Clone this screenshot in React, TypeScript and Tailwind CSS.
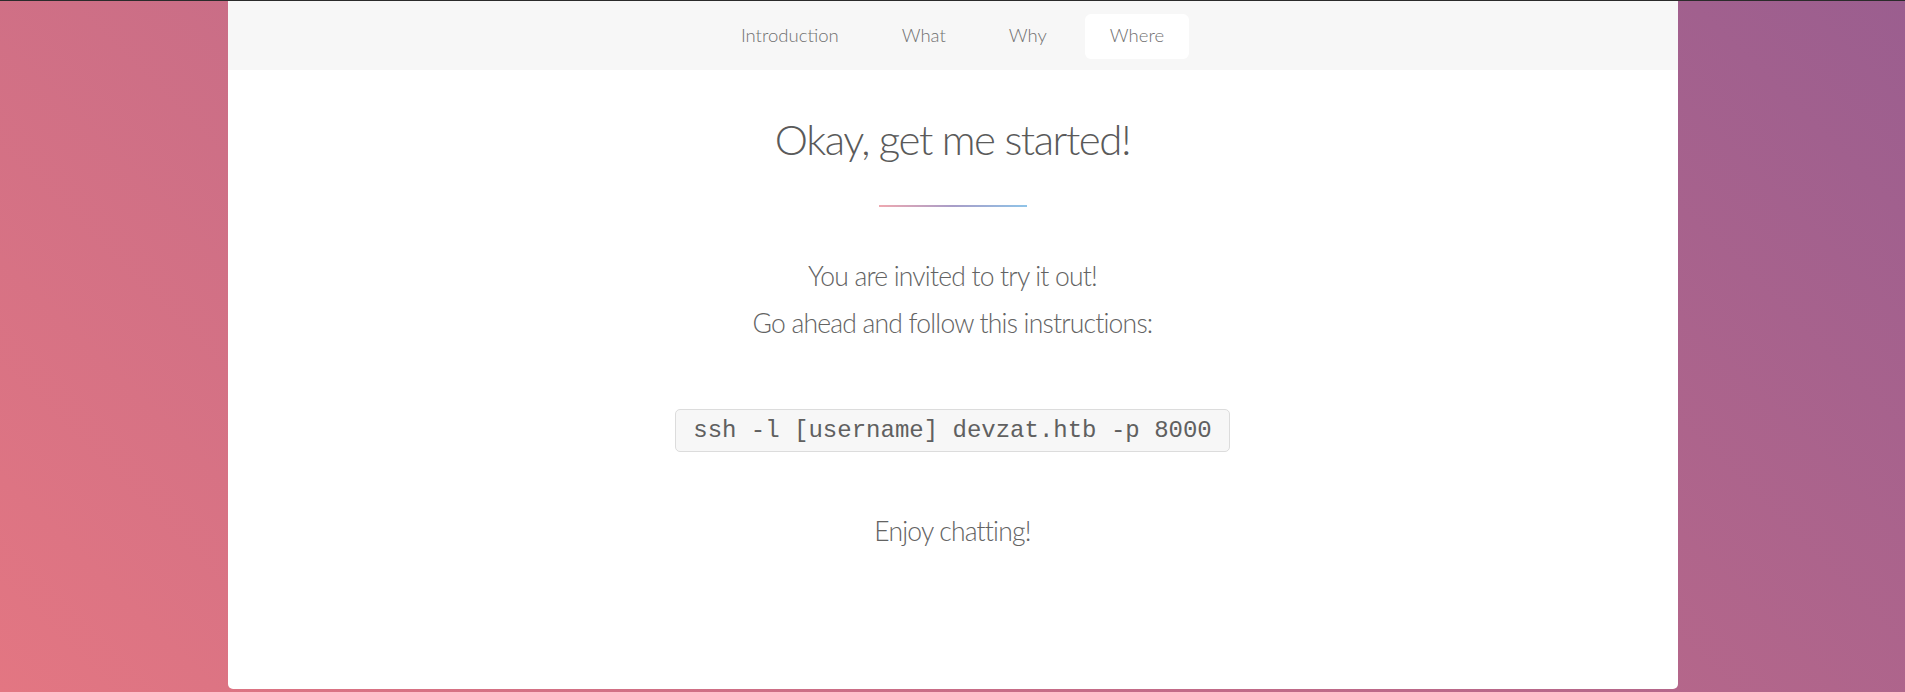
const NAV = ["Introduction", "What", "Why", "Where"];

export default function App() {
  return (
    <div className="min-h-screen border-t border-[#2b2b2b] bg-[linear-gradient(45deg,#e37682_0%,#9b5e8f_100%)] font-['Lato',sans-serif]">
      <div className="mx-auto w-[1450px] rounded-b-[5px] bg-white pb-[134px]">
        <nav className="flex h-[69px] items-center justify-center gap-[13px] bg-[#f7f7f7]">
          {NAV.map((item) => (
            <a
              key={item}
              className={
                "mt-[1px] flex h-[45px] items-center rounded-[6px] px-[25px] text-[18.5px] font-light text-[#707070] " +
                (item === "Where" ? "bg-white" : "")
              }
            >
              {item}
            </a>
          ))}
        </nav>

        <div className="flex flex-col items-center text-center text-[#636363]">
          <h2 className="mt-[42px] text-[42px] leading-[1.3] font-light tracking-[-0.035em] text-[#5a5a5a]">
            Okay, get me started!
          </h2>
          <div className="mt-[38px] h-[2px] w-[148px] bg-[linear-gradient(90deg,#efa8b0,#a89dc8,#8fc4e8)]" />

          <p className="mt-[46px] text-[26.5px] leading-[47px] font-light tracking-[-0.03em]">
            You are invited to try it out!
            <br />
            Go ahead and follow this instructions:
          </p>

          <code className="mt-[62px] rounded-[5px] border border-[#dcdcdc] bg-[#f7f7f7] px-[17px] py-[5px] font-['Liberation_Mono',monospace] text-[24px] leading-[31px] text-[#606060]">
            ssh -l [username] devzat.htb -p 8000
          </code>

          <p className="mt-[56px] text-[26.5px] leading-[47px] font-light tracking-[-0.03em]">
            Enjoy chatting!
          </p>
        </div>
      </div>
    </div>
  );
}
